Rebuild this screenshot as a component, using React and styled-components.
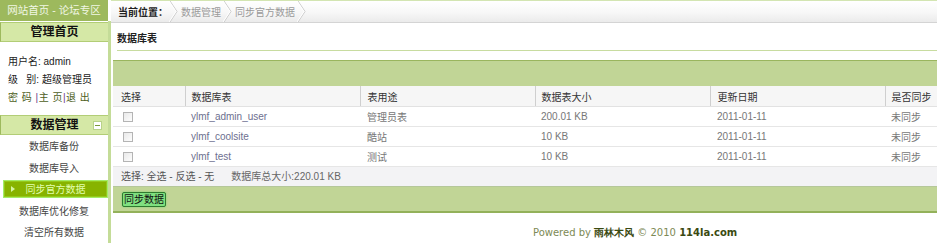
import React from 'react';
import styled, { createGlobalStyle } from 'styled-components';

const GlobalStyle = createGlobalStyle`
  html, body {
    margin: 0;
    padding: 0;
    background: #fff;
  }
  body {
    font-family: "Liberation Sans", "Noto Sans CJK SC", sans-serif;
    font-size: 10px;
    color: #333;
    overflow: hidden;
  }
`;

const Page = styled.div`
  display: flex;
  width: 937px;
  height: 243px;
  overflow: hidden;
`;

const Side = styled.div`
  width: 111px;
  flex-shrink: 0;
  display: flex;
  flex-direction: column;
`;

const SideTop = styled.div`
  width: 108px;
  height: 21px;
  line-height: 21px;
  background: #9db95d;
  color: #f1f7e4;
  font-size: 10.5px;
  text-align: center;
`;

const SideBody = styled.div`
  flex: 1;
  width: 108px;
  padding-top: 1px;
  border-right: 3px solid #c4dc98;
`;

const SideTitle = styled.div`
  position: relative;
  height: 18px;
  line-height: 18px;
  background: #d5e8a6;
  border-top: 1px solid #b2cd76;
  border-bottom: 1px solid #b2cd76;
  border-left: 1px solid #9db95d;
  font-size: 12px;
  font-weight: bold;
  text-align: center;
  color: #111;
`;

const Toggle = styled.span`
  position: absolute;
  right: 6px;
  top: 5px;
  width: 7px;
  height: 7px;
  background: #fff;
  border: 1px solid #b9d28a;
  display: flex;
  align-items: center;
  justify-content: center;
  &::after {
    content: '';
    width: 5px;
    height: 1px;
    background: #7a9a3a;
  }
`;

const UserInfo = styled.div`
  padding: 11px 0 8px 8px;
  line-height: 18px;
  color: #222;
`;

const Links = styled.div`
  color: #4d5e1c;
  letter-spacing: 0.5px;
  span {
    color: #6a3d8a;
  }
`;

const NavItem = styled.div`
  height: 21.5px;
  display: flex;
  align-items: center;
  justify-content: center;
  color: #444;
`;

const NavActive = styled.div`
  position: relative;
  height: 16px;
  margin: 1.5px 0 2px 3px;
  display: flex;
  align-items: center;
  justify-content: center;
  background: #87b300;
  border: 1px solid #a3ec68;
  box-shadow: inset 0 0 0 1px #95c81a;
  color: #e2ffb0;
  &::before {
    content: '';
    position: absolute;
    left: 7px;
    top: 5px;
    border-left: 4px solid #d4f5a0;
    border-top: 3px solid transparent;
    border-bottom: 3px solid transparent;
  }
`;

const Main = styled.div`
  flex: 1;
  min-width: 0;
  display: flex;
  flex-direction: column;
  overflow: hidden;
`;

const Crumbs = styled.div`
  height: 21px;
  display: flex;
  align-items: center;
  padding-left: 7px;
  background: linear-gradient(#ffffff, #f7f7f7 55%, #ebebeb);
  border-top: 1px solid #d3e5b2;
  border-bottom: 1px solid #d4d4d4;
  white-space: nowrap;
`;

const CrumbLabel = styled.span`
  color: #222;
  font-weight: bold;
  margin-right: 1px;
`;

const Crumb = styled.span`
  color: #9a9a9a;
  margin: 0 2px 0 3px;
`;

const Chevron = () => (
  <svg width="9" height="21" viewBox="0 0 9 21" style={{ flexShrink: 0 }}>
    <polyline points="1,0 8,10.5 1,21" fill="none" stroke="#c9c9c9" strokeWidth="1" />
    <polyline points="0,0 7,10.5 0,21" fill="none" stroke="#ffffff" strokeWidth="1" />
  </svg>
);

const Heading = styled.div`
  margin-left: 6px;
  padding: 10px 0 5px;
  line-height: 12px;
  font-weight: bold;
  color: #222;
  border-bottom: 1px solid #c8dca0;
`;

const Panel = styled.div`
  margin: 9px 0 0 2px;
`;

const Band = styled.div`
  height: ${(p) => p.h}px;
  background: #c1d596;
  border-top: 1px solid ${(p) => p.top};
  border-bottom: ${(p) => (p.bottom ? `2px solid ${p.bottom}` : 'none')};
  display: flex;
  align-items: center;
  padding-left: 9px;
`;

const Table = styled.table`
  width: 824px;
  border-collapse: collapse;
  table-layout: fixed;
`;

const Th = styled.th`
  height: 20px;
  padding: 0 0 0 ${(p) => p.pl || 7}px;
  text-align: left;
  font-weight: normal;
  color: #333;
  background: #f6f6f6;
  border-right: 1px solid #cfcfcf;
  border-bottom: 1px solid #e2e2e2;
  white-space: nowrap;
  overflow: hidden;
`;

const Td = styled.td`
  height: 19px;
  padding: 0 0 0 ${(p) => p.pl || 7}px;
  color: ${(p) => p.c || '#777'};
  border-bottom: 1px solid #e6e6e6;
  white-space: nowrap;
`;

const Check = styled.input.attrs({ type: 'checkbox' })`
  appearance: none;
  margin: 0;
  width: 10px;
  height: 10px;
  display: block;
  border: 1px solid #b4b4b4;
  background: linear-gradient(135deg, #e9e9e9, #fdfdfd);
`;

const Summary = styled.div`
  height: 19px;
  line-height: 19px;
  padding-left: 8px;
  background: #f3f3f5;
  color: #555;
  white-space: nowrap;
  span {
    margin-left: 17px;
    color: #666;
  }
`;

const SyncButton = styled.button`
  font: inherit;
  font-size: 10px;
  color: #111;
  padding: 0 1px;
  height: 15px;
  line-height: 13px;
  background: #7fe07f;
  border: 1px solid #2f7a2f;
  border-radius: 2px;
  box-shadow: 0 0 2px #6cd86c;
`;

const Powered = styled.div`
  padding: 13px 0 0 422px;
  font-family: "DejaVu Sans", Verdana, sans-serif;
  font-size: 10px;
  color: #7d8a55;
  white-space: nowrap;
  b {
    color: #3b4a12;
  }
`;

const cols = [72, 175, 175, 175, 175, 52];

const rows = [
  { name: 'ylmf_admin_user', use: '管理员表', size: '200.01 KB', date: '2011-01-11', sync: '未同步' },
  { name: 'ylmf_coolsite', use: '酷站', size: '10 KB', date: '2011-01-11', sync: '未同步' },
  { name: 'ylmf_test', use: '测试', size: '10 KB', date: '2011-01-11', sync: '未同步' },
];

export default function App() {
  return (
    <Page>
      <GlobalStyle />
      <Side>
        <SideTop>网站首页 - 论坛专区</SideTop>
        <SideBody>
          <SideTitle>管理首页</SideTitle>
          <UserInfo>
            <div>用户名: admin</div>
            <div>级&nbsp;&nbsp;&nbsp;别: 超级管理员</div>
            <Links>密 码 <span>|</span>主 页<span>|</span>退 出</Links>
          </UserInfo>
          <SideTitle>
            数据管理
            <Toggle />
          </SideTitle>
          <NavItem>数据库备份</NavItem>
          <NavItem>数据库导入</NavItem>
          <NavActive>同步官方数据</NavActive>
          <NavItem>数据库优化修复</NavItem>
          <NavItem>清空所有数据</NavItem>
        </SideBody>
      </Side>
      <Main>
        <Crumbs>
          <CrumbLabel>当前位置：</CrumbLabel>
          <Chevron />
          <Crumb>数据管理</Crumb>
          <Chevron />
          <Crumb>同步官方数据</Crumb>
          <Chevron />
        </Crumbs>
        <Heading>数据库表</Heading>
        <Panel>
          <Band h={25} top="#9ab55e" />
          <Table>
            <colgroup>
              {cols.map((w, i) => (
                <col key={i} style={{ width: w }} />
              ))}
            </colgroup>
            <thead>
              <tr>
                <Th pl={8}>选择</Th>
                <Th pl={6}>数据库表</Th>
                <Th>表用途</Th>
                <Th pl={6}>数据表大小</Th>
                <Th>更新日期</Th>
                <Th pl={6}>是否同步</Th>
              </tr>
            </thead>
            <tbody>
              {rows.map((r) => (
                <tr key={r.name}>
                  <Td pl={10}><Check /></Td>
                  <Td pl={6} c="#6d6f8f">{r.name}</Td>
                  <Td>{r.use}</Td>
                  <Td pl={6}>{r.size}</Td>
                  <Td>{r.date}</Td>
                  <Td pl={6}>{r.sync}</Td>
                </tr>
              ))}
            </tbody>
          </Table>
          <Summary>
            选择: 全选 - 反选 - 无<span>数据库总大小:220.01 KB</span>
          </Summary>
          <Band h={24} top="#b5c79a" bottom="#93b15a">
            <SyncButton>同步数据</SyncButton>
          </Band>
        </Panel>
        <Powered>
          Powered by <b>雨林木风</b> © 2010 <b>114la.com</b>
        </Powered>
      </Main>
    </Page>
  );
}
